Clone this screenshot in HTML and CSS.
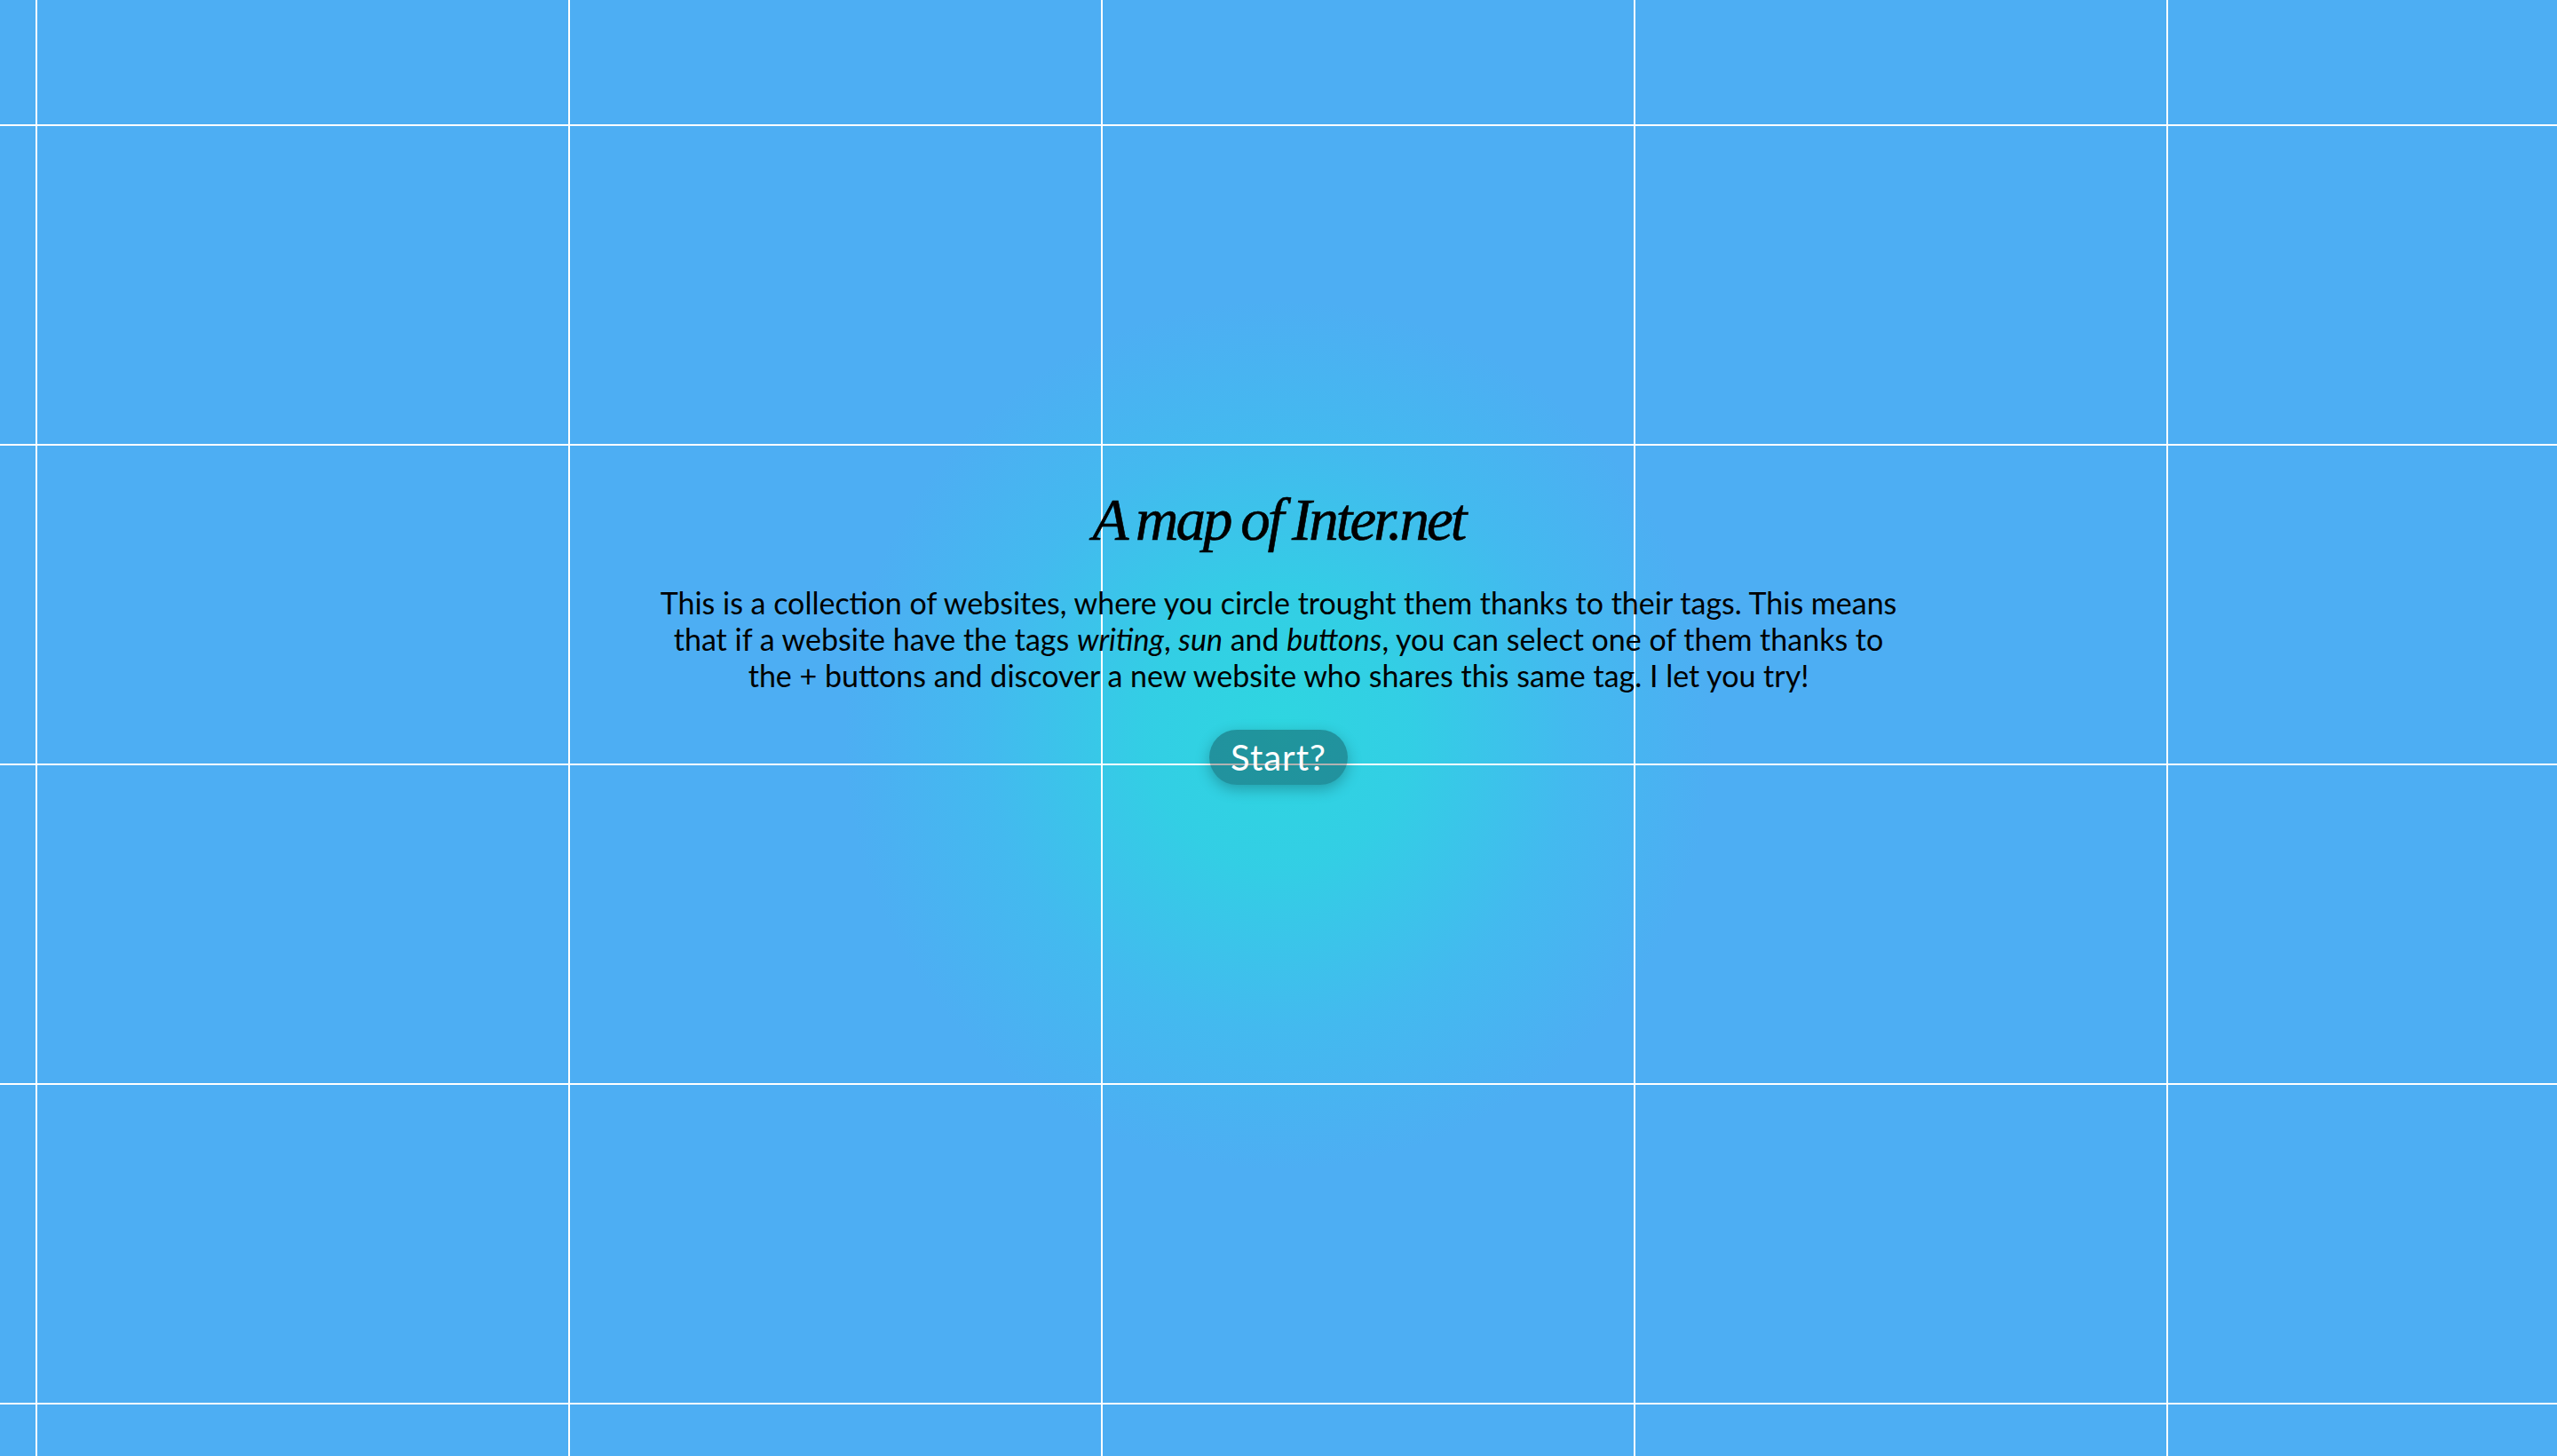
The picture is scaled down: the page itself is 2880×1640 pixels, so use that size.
FILE: index.html
```html
<!DOCTYPE html>
<html lang="en">
<head>
<meta charset="utf-8">
<title>A map of Inter.net</title>
<link rel="stylesheet" href="styles.css">
</head>
<body>
<div class="stage">
  <div class="glow"></div>
  <div class="grid"></div>
  <main class="intro">
    <h1 class="title">A map of Inter.net</h1>
    <p class="lead">This is a collection of websites, where you circle trought them thanks to their tags. This means that if a website have the tags <em>writing</em>, <em>sun</em> and <em>buttons</em>, you can select one of them thanks to the + buttons and discover a new website who shares this same tag. I let you try!</p>
    <button class="start">Start?</button>
  </main>
</div>
</body>
</html>
```
FILE: styles.css
```css
html, body {
  margin: 0;
  padding: 0;
  width: 100%;
  height: 100%;
  overflow: hidden;
}
body {
  background: #4daef3;
  font-family: Lato, "Open Sans", sans-serif;
}
.stage {
  position: relative;
  width: 100%;
  height: 100%;
}
.glow {
  position: absolute;
  inset: 0;
  background: radial-gradient(circle at 1440px 828px, rgba(46, 214, 224, 1) 0px, rgba(46, 212, 226, 0.85) 150px, rgba(55, 200, 234, 0.45) 330px, rgba(77, 174, 243, 0) 490px);
}
.grid {
  position: absolute;
  inset: 0;
  background-image:
    linear-gradient(to right, #ffffff 0, #ffffff 2px, transparent 2px),
    linear-gradient(to bottom, #ffffff 0, #ffffff 2px, transparent 2px);
  background-size: 600px 100%, 100% 360px;
  background-position: 40px 0, 0 140px;
}
.intro {
  position: relative;
  display: flex;
  flex-direction: column;
  align-items: center;
  padding-top: 545px;
}
.title {
  margin: 0;
  font-family: "Liberation Serif", serif;
  font-style: italic;
  font-weight: 400;
  font-size: 67px;
  line-height: 80px;
  letter-spacing: -3px;
  word-spacing: -2px;
  color: #000;
  -webkit-text-stroke: 0.6px #000;
}
.lead {
  margin: 33px 0 0;
  width: 1420px;
  text-align: center;
  font-size: 34px;
  line-height: 41px;
  color: #000;
}
.lead em {
  font-style: italic;
}
.start {
  margin-top: 41px;
  height: 62px;
  padding: 0 24px;
  border: none;
  border-radius: 31px;
  background: rgba(0, 0, 0, 0.3);
  color: #fff;
  font-family: Lato, "Open Sans", sans-serif;
  font-size: 40px;
  letter-spacing: 1px;
  box-shadow: 0 5px 16px rgba(0, 0, 0, 0.25);
}
```
